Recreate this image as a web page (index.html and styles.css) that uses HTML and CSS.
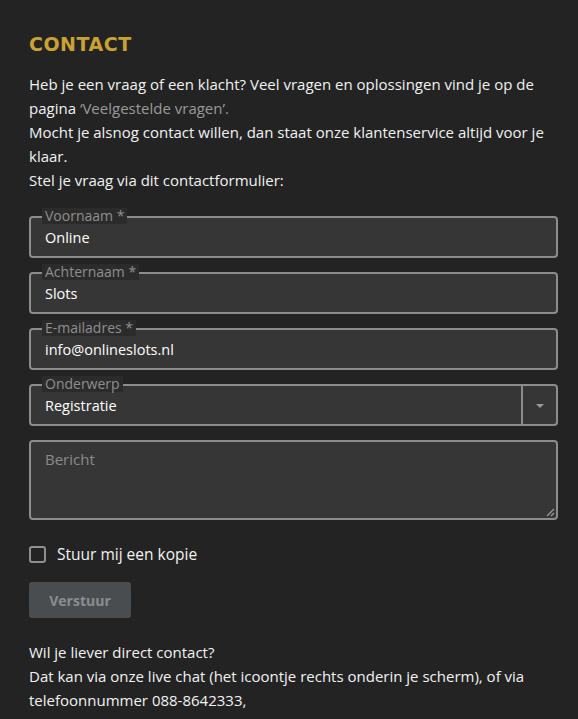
FILE: index.html
```html
<!DOCTYPE html>
<html lang="nl">
<head>
<meta charset="utf-8">
<title>Contact</title>
<link rel="stylesheet" href="styles.css">
</head>
<body>
<main class="page">
  <h1 class="title">CONTACT</h1>
  <p class="text">Heb je een vraag of een klacht? Veel vragen en oplossingen vind je op de pagina <span class="muted">‘Veelgestelde vragen’.</span><br>Mocht je alsnog contact willen, dan staat onze klantenservice altijd voor je klaar.<br>Stel je vraag via dit contactformulier:</p>
  <form class="form">
    <div class="field">
      <span class="label">Voornaam *</span>
      <span class="value">Online</span>
    </div>
    <div class="field">
      <span class="label">Achternaam *</span>
      <span class="value">Slots</span>
    </div>
    <div class="field">
      <span class="label">E-mailadres *</span>
      <span class="value">info@onlineslots.nl</span>
    </div>
    <div class="field select">
      <span class="label">Onderwerp</span>
      <span class="value">Registratie</span>
      <span class="sel-btn"><span class="caret"></span></span>
    </div>
    <div class="field area">
      <span class="placeholder">Bericht</span>
      <svg class="grip" width="10" height="10" viewBox="0 0 10 10"><path d="M9 2 L2 9 M9 6 L6 9" stroke="#9a9a9a" stroke-width="1.2"/></svg>
    </div>
    <label class="check"><span class="box"></span><span>Stuur mij een kopie</span></label>
    <div class="actions"><span class="btn">Verstuur</span></div>
  </form>
  <p class="text bottom">Wil je liever direct contact?<br>Dat kan via onze live chat (het icoontje rechts onderin je scherm), of via telefoonnummer 088-8642333,</p>
</main>
</body>
</html>
```
FILE: styles.css
```css
html, body {
  margin: 0;
  padding: 0;
  background: #232323;
}
body {
  font-family: "Open Sans", "DejaVu Sans", sans-serif;
  color: #f2f2f2;
}
.page {
  padding: 30px 20px 0 29px;
  width: 529px;
}
.title {
  margin: 0;
  font-family: "DejaVu Sans", sans-serif;
  font-weight: bold;
  font-size: 19px;
  line-height: 28px;
  letter-spacing: 0.5px;
  color: #c9a233;
}
.text {
  margin: 14px 0 0;
  font-size: 15px;
  line-height: 24px;
}
.muted {
  color: #9a9a9a;
}
.form {
  margin-top: 24px;
  display: flex;
  flex-direction: column;
  gap: 14px;
}
.field {
  position: relative;
  box-sizing: border-box;
  height: 42px;
  border: 2px solid #8c8c8c;
  border-radius: 4px;
  background: #373637;
  display: flex;
  align-items: center;
  padding: 1px 14px 0;
}
.label {
  position: absolute;
  top: -10px;
  left: 11px;
  padding: 0 3px 0 3px;
  background: #2c2b2c;
  font-size: 14px;
  line-height: 16px;
  color: #8f8f8f;
}
.value {
  font-size: 14.5px;
  color: #ffffff;
}
.select {
  padding-right: 0;
}
.select .value {
  flex: 1;
}
.sel-btn {
  align-self: stretch;
  width: 33px;
  margin: -1px 0 -2px;
  border-left: 2px solid #8c8c8c;
  display: flex;
  align-items: center;
  justify-content: center;
}
.caret {
  width: 0;
  height: 0;
  border-left: 4px solid transparent;
  border-right: 4px solid transparent;
  border-top: 4px solid #9a9a9a;
}
.area {
  height: 80px;
  align-items: flex-start;
  padding-top: 7px;
}
.placeholder {
  font-size: 15px;
  color: #8a8a8a;
}
.grip {
  position: absolute;
  right: 1px;
  bottom: 1px;
}
.check {
  margin-top: 9px;
  display: flex;
  align-items: center;
  gap: 11px;
  font-size: 15.5px;
  color: #f2f2f2;
}
.box {
  box-sizing: border-box;
  width: 17px;
  height: 17px;
  border: 2px solid #8f8f8f;
  border-radius: 3px;
}
.actions {
  margin-top: 3px;
  display: flex;
}
.btn {
  width: 102px;
  height: 36px;
  border-radius: 3px;
  background: #4a4d50;
  color: #8b8d90;
  font-weight: bold;
  font-size: 14px;
  display: flex;
  align-items: center;
  justify-content: center;
}
.bottom {
  margin-top: 22px;
}
```
